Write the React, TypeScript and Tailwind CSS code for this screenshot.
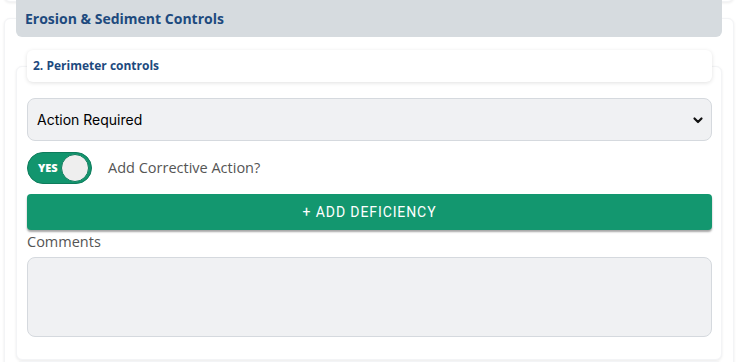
import React, { useState } from 'react';

const openSans = "font-['Open_Sans',sans-serif]";

export default function App() {
  const [corrective, setCorrective] = useState(true);
  const [status, setStatus] = useState('Action Required');
  const [comments, setComments] = useState('');

  return (
    <div className="h-[362px] w-[736px] overflow-hidden bg-white">
      {/* tail of the previous section card */}
      <div className="ml-1 mr-[2px] -mt-[20px] h-[22px] rounded-md border border-gray-100 bg-white shadow-[0_1px_3px_rgba(0,0,0,0.08)]" />

      <div className="ml-1 mr-[2px] mt-4 rounded-md border border-gray-100 bg-white px-[11px] shadow-[0_1px_3px_rgba(0,0,0,0.08)]">
        <div className="-mt-[19px] flex h-[37px] items-center rounded-b-md bg-[#d6dbdf] px-[9px]">
          <h2 className={`${openSans} text-[14px] font-bold text-[#1d4a7e]`}>Erosion &amp; Sediment Controls</h2>
        </div>

        <div className="mt-[29px] rounded-md border border-gray-100 bg-white pb-[22px] pl-[10px] pr-[9px] shadow-[0_1px_3px_rgba(0,0,0,0.08)]">
          <div className="-mt-[17px] flex h-[32px] items-center rounded-md bg-white px-[6px] shadow-[0_1px_4px_rgba(0,0,0,0.12)]">
            <h3 className={`${openSans} text-[12px] font-bold text-[#1d4a7e]`}>2. Perimeter controls</h3>
          </div>

          <div
            onClick={() => setStatus(status)}
            className="mt-4 flex h-[43px] items-center justify-between rounded-lg border border-[#d5d9de] bg-[#f0f1f3] pl-[9px] pr-[7px]"
          >
            <span className="font-['Inter',sans-serif] text-[14px] text-black">{status}</span>
            <svg width="12" height="12" viewBox="0 0 12 12" fill="none">
              <path d="M2.5 4.5 6 8l3.5-3.5" stroke="#111" strokeWidth="2.2" strokeLinecap="round" strokeLinejoin="round" />
            </svg>
          </div>

          <div className="mt-[11px] flex h-[32px] items-center gap-4">
            <button
              type="button"
              onClick={() => setCorrective(!corrective)}
              className="flex h-[32px] w-[65px] items-center justify-between rounded-full border border-[#0e7c5c] bg-[#12956e] pl-[10px] pr-[2px]"
            >
              <span className={`${openSans} text-[11px] font-extrabold text-white`}>{corrective ? 'YES' : 'NO'}</span>
              <span className="h-[28px] w-[28px] rounded-full border border-[#0e7c5c] bg-[#eeeeee]" />
            </button>
            <span className={`${openSans} text-[14.5px] text-[#555]`}>Add Corrective Action?</span>
          </div>

          <button
            type="button"
            className="mt-[10px] flex h-[36px] w-full items-center justify-center rounded bg-[#13976f] font-['Roboto',sans-serif] text-[14px] font-normal tracking-[0.9px] text-white shadow-[0_2px_2px_rgba(0,0,0,0.35)]"
          >
            + ADD DEFICIENCY
          </button>

          <label className={`${openSans} mt-[1px] block text-[14.5px] leading-[22px] text-[#555]`}>Comments</label>
          <textarea
            value={comments}
            onChange={(e) => setComments(e.target.value)}
            className="mt-[4px] block h-[80px] w-full resize-none rounded-lg border border-[#d5d9de] bg-[#f0f1f3] outline-none"
          />
        </div>

        <div className="mt-[1px] h-[20px] rounded-md border border-gray-100 bg-white shadow-[0_1px_3px_rgba(0,0,0,0.08)]" />
      </div>
    </div>
  );
}
